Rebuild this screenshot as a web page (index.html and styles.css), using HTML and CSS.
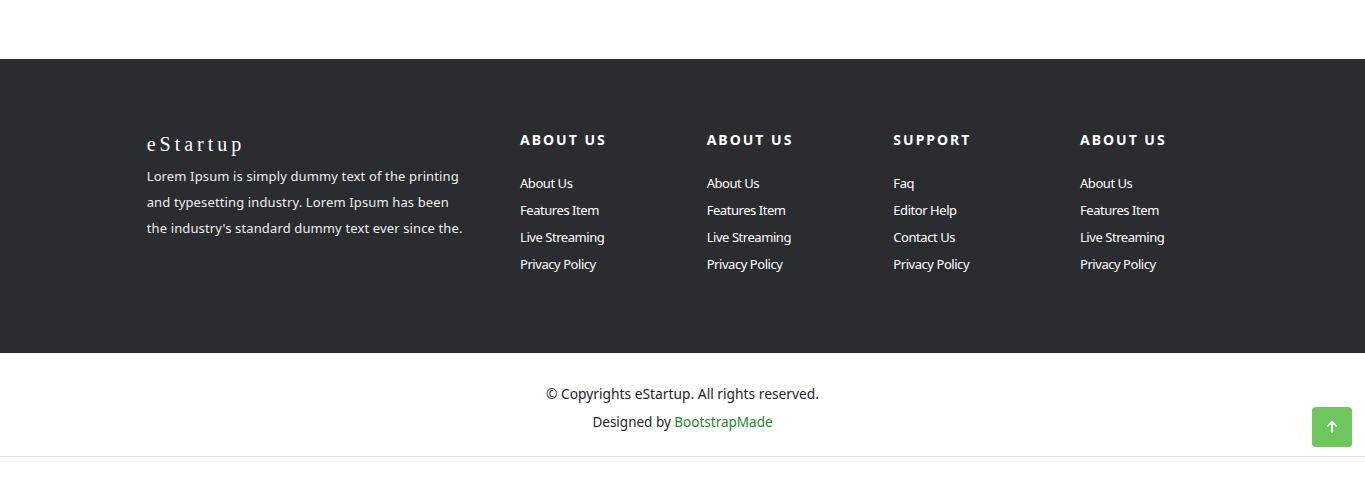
FILE: index.html
```html
<!DOCTYPE html>
<html lang="en">
<head>
<meta charset="utf-8">
<title>eStartup</title>
<link rel="stylesheet" href="styles.css">
</head>
<body>
<div class="top-space"></div>
<footer class="footer-top">
  <div class="footer-grid">
    <div class="footer-info">
      <h3 class="brand">eStartup</h3>
      <p class="about-text">Lorem Ipsum is simply dummy text of the printing and typesetting industry. Lorem Ipsum has been the industry's standard dummy text ever since the.</p>
    </div>
    <div class="footer-links">
      <h4>About Us</h4>
      <ul>
        <li><a href="#">About Us</a></li>
        <li><a href="#">Features Item</a></li>
        <li><a href="#">Live Streaming</a></li>
        <li><a href="#">Privacy Policy</a></li>
      </ul>
    </div>
    <div class="footer-links">
      <h4>About Us</h4>
      <ul>
        <li><a href="#">About Us</a></li>
        <li><a href="#">Features Item</a></li>
        <li><a href="#">Live Streaming</a></li>
        <li><a href="#">Privacy Policy</a></li>
      </ul>
    </div>
    <div class="footer-links">
      <h4>Support</h4>
      <ul>
        <li><a href="#">Faq</a></li>
        <li><a href="#">Editor Help</a></li>
        <li><a href="#">Contact Us</a></li>
        <li><a href="#">Privacy Policy</a></li>
      </ul>
    </div>
    <div class="footer-links">
      <h4>About Us</h4>
      <ul>
        <li><a href="#">About Us</a></li>
        <li><a href="#">Features Item</a></li>
        <li><a href="#">Live Streaming</a></li>
        <li><a href="#">Privacy Policy</a></li>
      </ul>
    </div>
  </div>
</footer>
<div class="copyrights">
  <p class="copy">© Copyrights eStartup. All rights reserved.</p>
  <p class="credits">Designed by <a href="#">BootstrapMade</a></p>
</div>
<a href="#" class="back-to-top" aria-label="Back to top">
  <svg width="14" height="14" viewBox="0 0 16 16" fill="none" stroke="#fff" stroke-width="2" stroke-linecap="round" stroke-linejoin="round"><path d="M8 14V2.5M3 7l5-5 5 5"/></svg>
</a>
</body>
</html>
```
FILE: styles.css
```css
html, body {
  margin: 0;
  padding: 0;
  background: #fff;
}
body {
  font-family: "Noto Sans", "Open Sans", sans-serif;
  position: relative;
  min-height: 483px;
}
.top-space {
  height: 59px;
}
.footer-top {
  background: #2b2c30;
  height: 294px;
  box-sizing: border-box;
  padding-top: 72px;
}
.footer-grid {
  display: grid;
  grid-template-columns: 373.33px repeat(4, 186.67px);
  padding-left: 146.7px;
}
.brand {
  margin: 0 0 6px;
  font-family: "Liberation Serif", serif;
  font-weight: normal;
  font-size: 20px;
  line-height: 26px;
  letter-spacing: 4px;
  color: #fff;
}
.about-text {
  margin: 0;
  width: 321px;
  font-size: 13px;
  line-height: 26px;
  letter-spacing: 0.13px;
  color: #eee;
}
.footer-links h4 {
  margin: 0 0 21px;
  font-size: 14px;
  line-height: 18px;
  font-weight: bold;
  letter-spacing: 2px;
  text-transform: uppercase;
  color: #fff;
}
.footer-links ul {
  list-style: none;
  margin: 0;
  padding: 0;
}
.footer-links li {
  font-size: 13px;
  line-height: 27px;
  letter-spacing: -0.45px;
}
.footer-links a {
  color: #fff;
  text-decoration: none;
}
.copyrights {
  text-align: center;
  padding-top: 29px;
  height: 104px;
  box-sizing: border-box;
  border-bottom: 1px solid #e2e2e2;
  color: #212529;
}
.copy {
  margin: 0;
  font-size: 13.8px;
  line-height: 24px;
}
.credits {
  margin: 4px 0 0;
  font-size: 13.5px;
  line-height: 24px;
}
.credits a {
  color: #198a2c;
  text-decoration: none;
}
.back-to-top {
  position: absolute;
  left: 1312px;
  top: 407px;
  width: 40px;
  height: 40px;
  border-radius: 4px;
  background: #6dc75c;
  display: flex;
  align-items: center;
  justify-content: center;
}
```
